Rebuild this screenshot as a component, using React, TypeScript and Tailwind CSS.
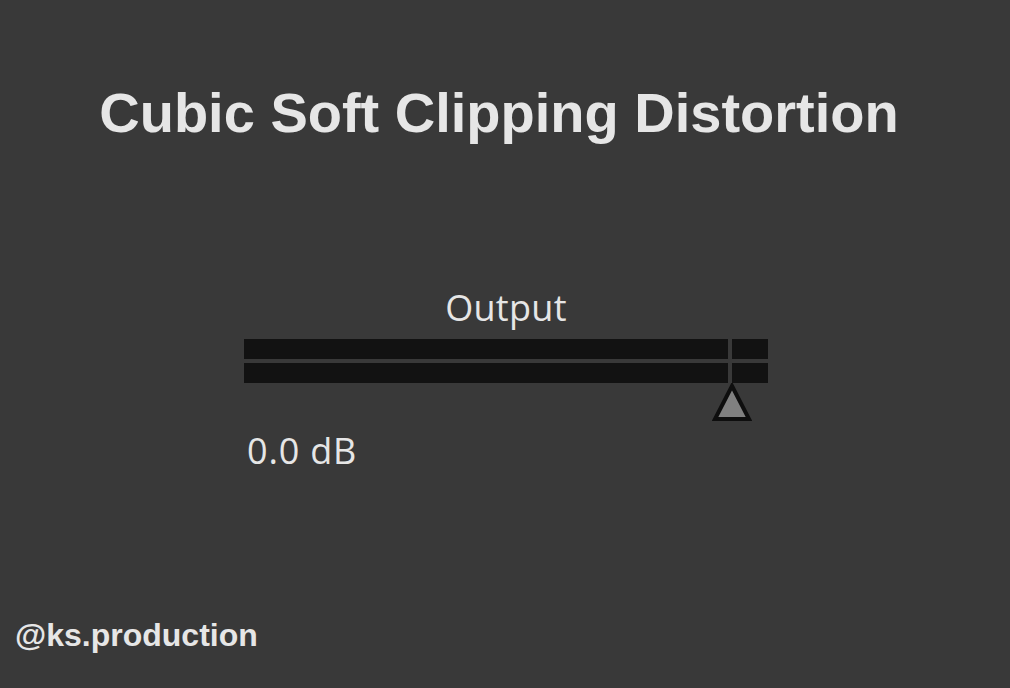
import React from 'react';

const arial = { fontFamily: '"Liberation Sans", Arial, sans-serif' };

function Meter() {
  return (
    <div className="relative">
      <div className="flex h-[20px] gap-[4px]">
        <div className="w-[484px] bg-[#121212]" />
        <div className="flex-1 bg-[#121212]" />
      </div>
      <div className="mt-[4px] flex h-[20px] gap-[4px]">
        <div className="w-[484px] bg-[#121212]" />
        <div className="flex-1 bg-[#121212]" />
      </div>
      <svg className="absolute left-[468px] top-[44px]" width="40" height="40" viewBox="0 0 40 40">
        <polygon points="20,3 37,36 3,36" fill="#808080" stroke="#0e0e0e" strokeWidth="4" strokeLinejoin="miter" />
      </svg>
    </div>
  );
}

export default function App() {
  return (
    <div className="flex h-[688px] w-[1010px] flex-col overflow-hidden bg-[#393939] text-[#e6e6e6]">
      <h1
        className="mt-[85px] pr-[12px] text-center text-[56px] font-bold leading-none"
        style={arial}
      >
        Cubic Soft Clipping Distortion
      </h1>

      <div className="ml-[244px] mt-[149px] w-[524px] font-['Open_Sans',sans-serif] font-medium">
        <p className="text-center text-[36px] leading-none tracking-[0.3px]">Output</p>
        <div className="mt-[13px]">
          <Meter />
        </div>
        <p className="ml-[3px] mt-[50px] text-[36px] leading-none tracking-[0.8px]">0.0 dB</p>
      </div>

      <p className="mb-[37px] ml-[15px] mt-auto text-[32px] font-bold leading-none" style={arial}>
        @ks.production
      </p>
    </div>
  );
}
